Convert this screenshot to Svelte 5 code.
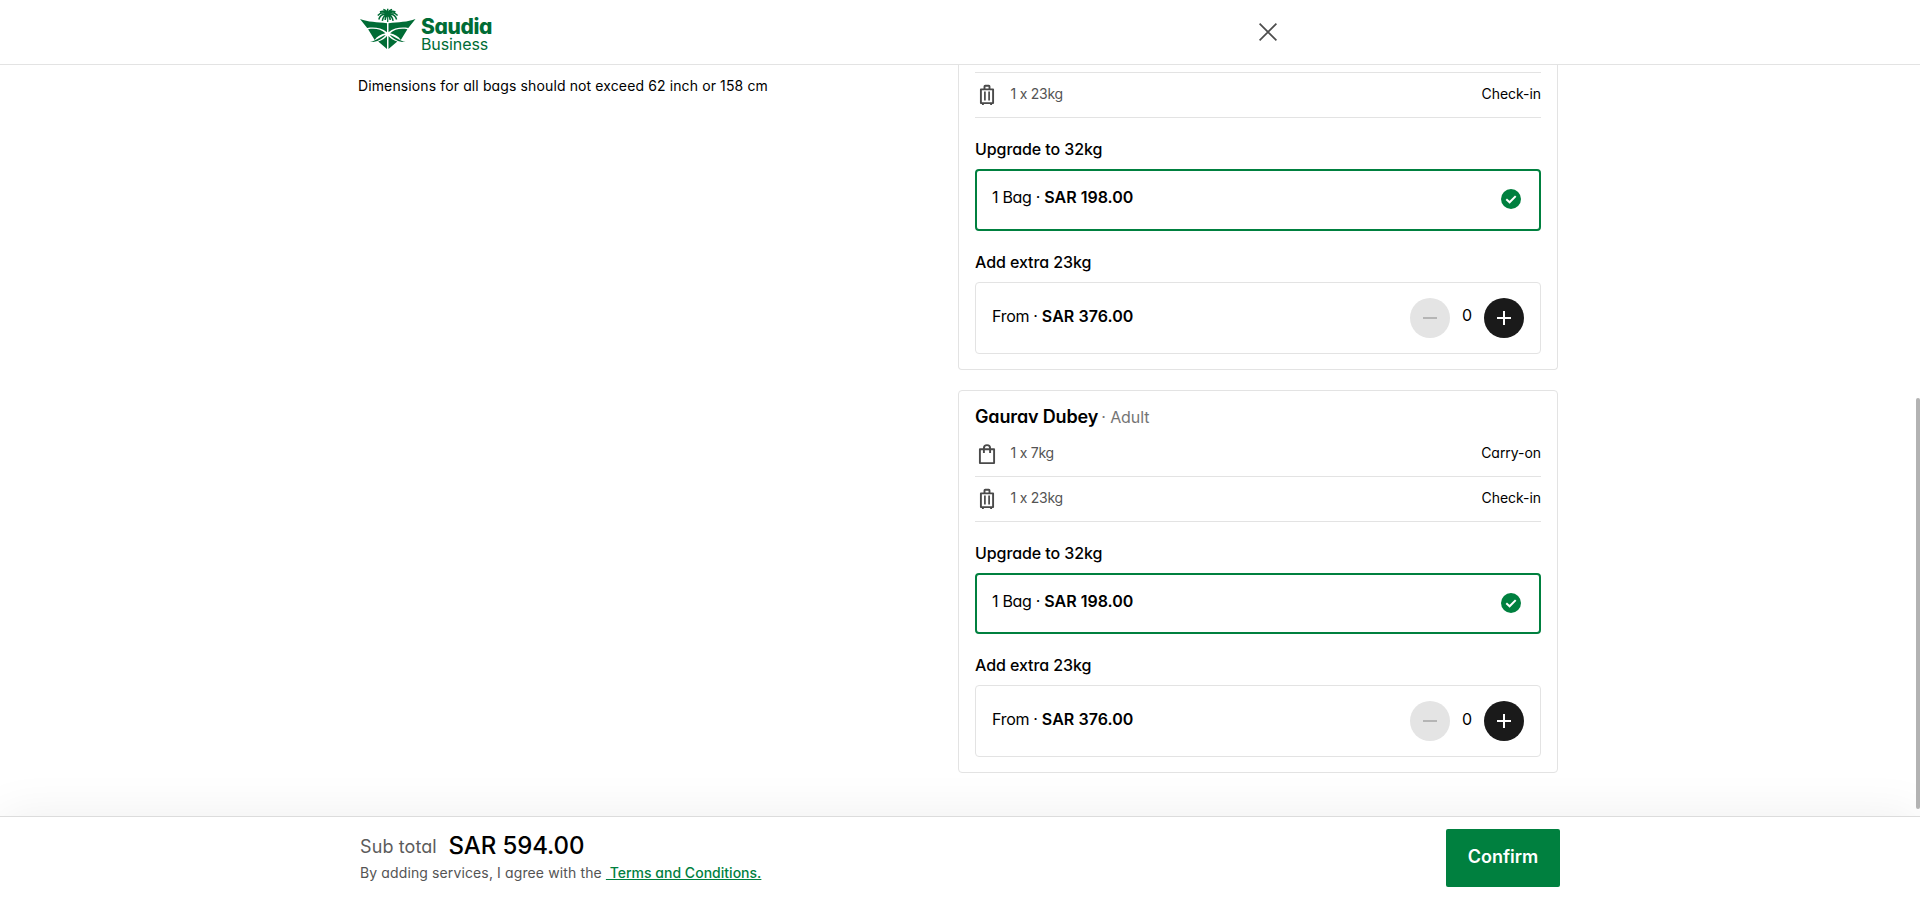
<script>
  const passengers = [
    {
      continued: true,
      allowances: [{ icon: 'suitcase', amount: '1 x 23kg', type: 'Check-in' }],
      extra: 0
    },
    {
      name: 'Gaurav Dubey',
      kind: 'Adult',
      allowances: [
        { icon: 'bag', amount: '1 x 7kg', type: 'Carry-on' },
        { icon: 'suitcase', amount: '1 x 23kg', type: 'Check-in' }
      ],
      extra: 0
    }
  ];
</script>

<div class="page">
  <header>
    <div class="wrap head">
      <div class="logo">
        <svg class="emblem" width="56" height="42" viewBox="0 0 56 42" fill="#006c35">
          <g fill="none" stroke="#006c35" stroke-width="1.500">
            <path d="M27.700 5.500C23 4.500 19.800 6.500 18.800 10.500M27.700 5C23.500 2.800 20.500 3.500 17.800 6.500M27.700 4.500C25 2 22.500 1.600 20 3M27.700 4.500C26.500 2 25 .8 23.300.600M27.700 5V-.3M27.700 6C25 6 23 8 22.300 11.800M27.700 6C26 7 25.200 9 25.200 11"/>
            <path d="M27.700 5.500C32.400 4.500 35.600 6.500 36.600 10.500M27.700 5C31.900 2.800 34.900 3.500 37.600 6.500M27.700 4.500C30.400 2 32.900 1.600 35.400 3M27.700 4.500C28.900 2 30.400.8 32.100.600M27.700 6C30.400 6 32.400 8 33.100 11.800M27.700 6C29.400 7 30.200 9 30.200 11"/>
            <path d="M27.700 5V13" stroke-width="1.200"/>
          </g>
          <path d="M0 10C8 13 17 13.200 27 14.200V23.200C21.500 18.800 14.500 17.800 7.200 18.900Z"/>
          <path d="M55.500 10C47.500 13 38.500 13.200 28.500 14.200V23.200C34 18.800 41 17.800 48.300 18.900Z"/>
          <path d="M8.100 20.200C15.500 19 21 20.300 25.400 24.300 20.500 25.300 17 27.500 14.700 30.900Z"/>
          <path d="M47.400 20.200C40 19 34.500 20.300 30.100 24.300 35 25.300 38.500 27.500 40.800 30.900Z"/>
          <path d="M10 33C16.500 33.400 22 30 25.700 25.900 20.500 27.200 16.500 31.500 10 33Z"/>
          <path d="M45.500 33C39 33.400 33.500 30 29.800 25.900 35 27.200 39 31.500 45.500 33Z"/>
          <path d="M27 27V40L18.200 32.400C22 31.500 25 29.600 27 27ZM28.500 27V40L37.300 32.400C33.500 31.500 30.500 29.600 28.500 27Z"/>
        </svg>
        <div class="brand">
          <span class="name">Saudia</span>
          <span class="sub">Business</span>
        </div>
      </div>
      <svg class="close" width="18" height="18" viewBox="0 0 18 18" fill="none" stroke="#4d4d4d" stroke-width="1.7">
        <path d="M.6.6 17.400 17.400M17.400.6.6 17.400"/>
      </svg>
    </div>
  </header>

  <main>
    <div class="wrap body">
      <p class="note">Dimensions for all bags should not exceed 62 inch or 158 cm</p>

      <div class="cards">
        {#each passengers as p}
          <section class="card" class:continued={p.continued}>
            {#if p.name}
              <h2><b>{p.name}</b> <span>· {p.kind}</span></h2>
            {/if}
            {#each p.allowances as a}
              <div class="row">
                <svg width="24" height="24" viewBox="0 0 24 24" fill="none" stroke="#4a4a4a" stroke-width="1.9">
                  {#if a.icon === 'bag'}
                    <path d="M4.900 7.300h14.200v13.800H4.900zM8.900 11V6.200a3.100 3.100 0 0 1 6.200 0V11" stroke-linejoin="round"/>
                  {:else}
                    <path d="M5.900 6.400h12.200v13.700H5.900z" stroke-linejoin="round"/>
                    <path d="M9.500 6V3.500q0-.7.7-.7h3.600q.7 0 .7.700V6M7.900 20v2M16.100 20v2"/>
                    <path d="M9.900 8.500v9M14.100 8.500v9" stroke-width="1.700"/>
                  {/if}
                </svg>
                <span class="amount">{a.amount}</span>
                <span class="type">{a.type}</span>
              </div>
            {/each}

            <h3>Upgrade to 32kg</h3>
            <div class="option selected">
              <div class="price">1 Bag · <b>SAR 198.00</b></div>
              <svg class="tick" width="20" height="20" viewBox="0 0 20 20" fill="none">
                <circle cx="10" cy="10" r="10" fill="#00803f"/>
                <path d="M5.300 10.300 8.600 13.300 14.700 7.100" stroke="#fff" stroke-width="2"/>
              </svg>
            </div>

            <h3>Add extra 23kg</h3>
            <div class="option stepper">
              <div class="price from">From · <b>SAR 376.00</b></div>
              <button class="minus" aria-label="Remove">
                <svg width="14" height="14" viewBox="0 0 14 14"><path d="M0 6h14v2H0z" fill="currentColor"/></svg>
              </button>
              <span class="count">{p.extra}</span>
              <button class="plus" aria-label="Add">
                <svg width="14" height="14" viewBox="0 0 14 14"><path d="M0 6h14v2H0zM6 0h2v14H6z" fill="currentColor"/></svg>
              </button>
            </div>
          </section>
        {/each}
      </div>
    </div>
  </main>

  <footer>
    <div class="wrap foot">
      <div>
        <div class="total"><span>Sub total</span><strong>SAR 594.00</strong></div>
        <div class="terms">By adding services, I agree with the <a href="#terms">&nbsp;Terms and Conditions.</a></div>
      </div>
      <button class="confirm">Confirm</button>
    </div>
  </footer>
  <div class="scrollbar"></div>
</div>

<style>
  :global(body) {
    margin: 0;
    overflow: hidden;
  }
  .page {
    position: relative;
    display: flex;
    flex-direction: column;
    height: 901px;
    background: #fff;
    color: #000;
    font-family: Inter, 'Liberation Sans', sans-serif;
    font-feature-settings: 'cv11', 'calt' 0;
    overflow: hidden;
  }
  .wrap {
    width: 1200px;
    margin: 0 auto;
    box-sizing: border-box;
  }
  header {
    flex: none;
    height: 64px;
    border-bottom: 1px solid #e3e3e3;
  }
  .head {
    display: flex;
    align-items: flex-start;
    padding-top: 9px;
    height: 64px;
  }
  .logo {
    display: flex;
    width: 899px;
  }
  .emblem {
    flex: none;
    overflow: visible;
  }
  .brand {
    display: flex;
    flex-direction: column;
    margin: 7px 0 0 5px;
    color: #006c35;
  }
  .name {
    font-size: 21px;
    line-height: 21px;
    font-weight: 800;
    letter-spacing: -0.4px;
  }
  .sub {
    font-size: 16px;
    line-height: 16px;
    margin-top: -1px;
    letter-spacing: -0.1px;
  }
  .close {
    margin-top: 14px;
  }
  main {
    flex: 1;
    min-height: 0;
    overflow: hidden;
  }
  .body {
    display: flex;
    justify-content: space-between;
    padding-right: 2px;
    align-items: flex-start;
  }
  .note {
    margin: 11px 0 0 -2px;
    font-size: 14px;
    line-height: 20px;
    letter-spacing: 0.12px;
  }
  .cards {
    width: 600px;
    flex: none;
  }
  .card {
    box-sizing: border-box;
    border: 1px solid #e3e3e3;
    border-radius: 4px;
    padding: 14px 16px 15px;
    margin-bottom: 20px;
  }
  .card.continued {
    border-top: 0;
    border-radius: 0 0 4px 4px;
    padding-top: 7.4px;
  }
  .continued .row:first-child {
    border-top: 1px solid #e3e3e3;
  }
  h2 {
    margin: 0 0 4px;
    font-size: 16px;
    line-height: 23px;
    height: 23px;
    font-weight: 400;
    letter-spacing: -0.05px;
  }
  h2 b {
    font-size: 18px;
    font-weight: 600;
    letter-spacing: -0.15px;
  }
  h2 span {
    margin-left: -1.5px;
    color: #757575;
  }
  .row {
    display: flex;
    align-items: flex-start;
    height: 44px;
    border-bottom: 1px solid #e3e3e3;
    font-size: 14px;
    line-height: 42px;
  }
  .row svg {
    flex: none;
    margin-top: 10px;
  }
  .amount {
    flex: 1;
    margin-left: 11.5px;
    color: #545454;
    letter-spacing: -0.25px;
  }
  .type {
    letter-spacing: -0.05px;
  }
  h3 {
    margin: 19px 0 7.8px;
    font-size: 16px;
    line-height: 24px;
    font-weight: 500;
    letter-spacing: -0.08px;
  }
  .option {
    box-sizing: border-box;
    display: flex;
    align-items: flex-start;
    border: 1px solid #e3e3e3;
    border-radius: 4px;
    font-size: 16px;
    line-height: 24px;
  }
  .selected {
    height: 61.8px;
    border: 2px solid #00803f;
    padding: 14px 18px 0 15px;
  }
  .price {
    flex: 1;
    letter-spacing: -0.3px;
  }
  .price b {
    font-weight: 600;
    letter-spacing: 0;
  }
  .from b {
    letter-spacing: 0.05px;
  }
  .tick {
    margin-top: 4px;
  }
  .stepper {
    height: 72px;
    padding: 15px 16px 0 16px;
  }
  .stepper .price {
    padding-top: 6px;
  }
  .count {
    width: 34px;
    padding-top: 5.4px;
    text-align: center;
  }
  button {
    border: 0;
    padding: 0;
    font: inherit;
  }
  .minus,
  .plus {
    display: flex;
    align-items: center;
    justify-content: center;
    width: 40px;
    height: 40px;
    border-radius: 50%;
    background: #e4e4e4;
    color: #b5b5b5;
  }
  .plus {
    background: #1a1a1a;
    color: #fff;
  }
  footer {
    position: relative;
    flex: none;
    height: 84px;
    border-top: 1px solid #dcdcdc;
    background: #fff;
    box-shadow: 0 0 50px rgba(0, 0, 0, 0.07);
  }
  .foot {
    display: flex;
    justify-content: space-between;
    align-items: flex-start;
    padding-top: 12px;
  }
  .total {
    display: flex;
    align-items: baseline;
    margin-top: 2px;
    line-height: 30px;
    height: 32px;
  }
  .total span {
    position: relative;
    top: -1px;
    width: 88.5px;
    font-size: 18px;
    color: #5c5c5c;
    letter-spacing: 0.1px;
  }
  .total strong {
    font-size: 24px;
    font-weight: 500;
    letter-spacing: -0.1px;
  }
  .terms {
    font-size: 14px;
    line-height: 20px;
    color: #545454;
    letter-spacing: 0.12px;
  }
  .terms a {
    color: #00803f;
    font-weight: 500;
    letter-spacing: 0.02px;
    text-decoration: underline;
    text-underline-offset: 1px;
  }
  .confirm {
    width: 114px;
    height: 58px;
    border-radius: 2px;
    background: #00803f;
    color: #fff;
    font-size: 18px;
    font-weight: 600;
    line-height: 56px;
    padding-bottom: 3px;
    letter-spacing: 0;
  }
  .scrollbar {
    position: absolute;
    right: 0;
    top: 398px;
    width: 4px;
    height: 411px;
    background: #b3b3b3;
    border-radius: 2px;
  }
</style>
